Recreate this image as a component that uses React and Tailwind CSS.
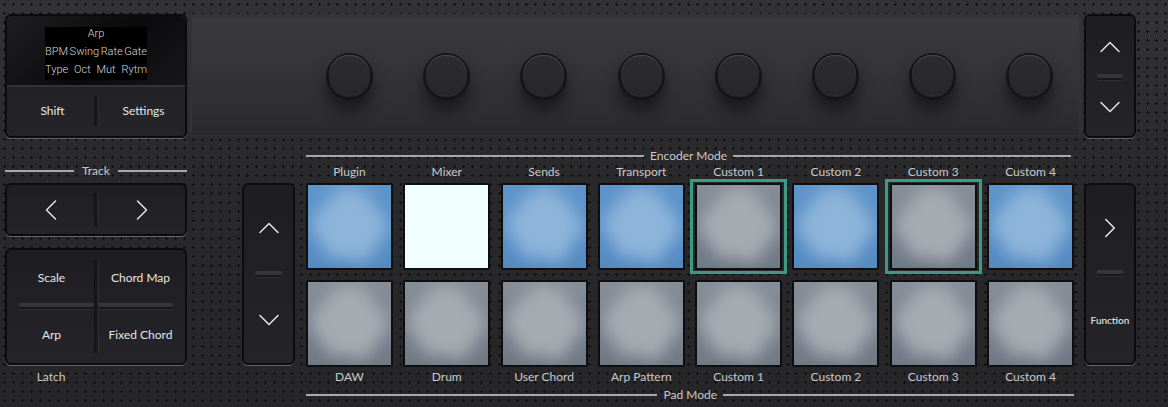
import { ChevronUp, ChevronDown, ChevronLeft, ChevronRight } from "lucide-react";

const font = "font-['Lato','Liberation_Sans',sans-serif]";

const topLabels = ["Plugin", "Mixer", "Sends", "Transport", "Custom 1", "Custom 2", "Custom 3", "Custom 4"];
const bottomLabels = ["DAW", "Drum", "User Chord", "Arp Pattern", "Custom 1", "Custom 2", "Custom 3", "Custom 4"];
const topPads = ["blue", "white", "blue", "blue", "active", "blue", "active", "blue"];

// panel button with the dark rim and the light lip along the bottom edge
function Panel({ className = "", children }) {
  return (
    <div
      className={`relative rounded-md border-2 border-[#0c0c0e] bg-[linear-gradient(180deg,#1e1e22,#252529)] shadow-[0_1px_0_0_#66666a] ${className}`}
    >
      {children}
    </div>
  );
}

function Groove({ vertical }) {
  return vertical ? (
    <div className="w-[4px] rounded-full bg-[#1b1b1e] shadow-[inset_1px_0_1px_#111113,1px_0_0_#2f2f33]" />
  ) : (
    <div className="h-[6px] rounded-full bg-[#37373b] shadow-[inset_0_-2px_1px_#18181b,0_1px_0_#2e2e32]" />
  );
}

function Pad({ kind }) {
  const base =
    kind === "blue"
      ? "bg-[linear-gradient(180deg,#5f95ca,#548ac1)]"
      : kind === "white"
        ? "bg-[#f1fefe]"
        : "bg-[linear-gradient(180deg,#868e98,#6f7885)]";
  // the glow under the pad: a few overlapping circles, blurred together
  const glow =
    kind === "blue"
      ? "bg-[radial-gradient(circle_at_50%_34%,#8db4da_25px,transparent_26px),radial-gradient(circle_at_28%_48%,#8db4da_19px,transparent_20px),radial-gradient(circle_at_72%_50%,#8db4da_19px,transparent_20px),radial-gradient(circle_at_36%_70%,#8db4da_15px,transparent_16px),radial-gradient(circle_at_62%_74%,#8db4da_15px,transparent_16px)]"
      : "bg-[radial-gradient(circle_at_50%_34%,#a6abb2_25px,transparent_26px),radial-gradient(circle_at_28%_48%,#a6abb2_19px,transparent_20px),radial-gradient(circle_at_72%_50%,#a6abb2_19px,transparent_20px),radial-gradient(circle_at_36%_70%,#a6abb2_15px,transparent_16px),radial-gradient(circle_at_62%_74%,#a6abb2_15px,transparent_16px)]";
  return (
    <div className="relative h-[87px]">
      <div className={`relative h-full overflow-hidden rounded-[2px] border-2 border-[#0d0e10] ${base}`}>
        {kind !== "white" && <div className={`absolute inset-0 blur-[8px] ${glow}`} />}
      </div>
      {kind === "active" && (
        <div className="absolute -inset-x-[5px] -inset-y-[4px] border-[3px] border-[#3f9a83]" />
      )}
    </div>
  );
}

function Knob() {
  return (
    <div className="h-[47px] w-[47px] rounded-full bg-[#151517] px-[3px] pb-[6px] pt-[2px] shadow-[0_12px_14px_#1c1c1f]">
      <div className="h-full w-full rounded-full bg-[linear-gradient(180deg,#2c2c30,#28282c)] shadow-[inset_0_1px_1px_#4a4a4e,0_3px_1px_#2a2a2e]" />
    </div>
  );
}

function Line() {
  return <div className="h-[2px] flex-1 bg-[#a9a9aa]" />;
}

export default function App() {
  return (
    <div
      className={`${font} flex h-[407px] w-[1168px] overflow-hidden bg-[#29292c] bg-[radial-gradient(#0f0f11_1px,transparent_1.4px),linear-gradient(180deg,#333336,#29292c_45%,#262629)] bg-[length:9px_9px,100%_100%] text-[12px] text-[#e6e6e6]`}
    >
      {/* left column */}
      <div className="ml-[5px] mt-[14px] flex w-[182px] flex-col">
        <Panel className="h-[124px]">
          <div className="flex h-[71px] items-start justify-center rounded-t-md border-b-2 border-[#333336] bg-[linear-gradient(135deg,#1f1f22_0%,#0a0a0c_55%,#17171a_100%)] pt-[11px]">
            <div className="flex h-[53px] w-[102px] flex-col gap-[4px] bg-black font-['Roboto',sans-serif] text-[11px] font-light leading-[14px] text-[#d8d8d8]">
              <div className="text-center">Arp</div>
              <div className="flex justify-between"><span>BPM</span><span>Swing</span><span>Rate</span><span>Gate</span></div>
              <div className="flex justify-between"><span>Type</span><span>Oct</span><span>Mut</span><span>Rytm</span></div>
            </div>
          </div>
          <div className="flex h-[47px] items-center">
            <div className="flex-1 pl-[4px] text-center">Shift</div>
            <div className="flex h-[30px]"><Groove vertical /></div>
            <div className="flex-1 pl-[4px] text-center">Settings</div>
          </div>
        </Panel>
        <div className="mt-[26px] flex h-[14px] items-center gap-[8px]">
          <Line />
          <span className="text-[#c9c9ca]">Track</span>
          <Line />
        </div>
        <Panel className="mt-[5px] h-[53px]">
          <div className="flex h-full items-center justify-center">
            <div className="flex flex-1 justify-center"><ChevronLeft size={36} strokeWidth={1} /></div>
            <div className="flex h-[34px]"><Groove vertical /></div>
            <div className="flex flex-1 justify-center"><ChevronRight size={36} strokeWidth={1} /></div>
          </div>
        </Panel>
        <Panel className="mt-[12px] h-[117px]">
          <div className="grid h-full grid-cols-2 grid-rows-2 text-center leading-none">
            <div className="flex items-center justify-center">Scale</div>
            <div className="flex items-center justify-center">Chord Map</div>
            <div className="flex items-center justify-center">Arp</div>
            <div className="flex items-center justify-center">Fixed Chord</div>
          </div>
          <div className="absolute inset-x-[11px] top-[53px]"><Groove /></div>
          <div className="absolute inset-y-[10px] left-1/2 flex -translate-x-1/2"><Groove vertical /></div>
        </Panel>
        <div className="mt-[3px] w-[92px] text-center text-[#c9c9ca]">Latch</div>
      </div>

      {/* middle column */}
      <div className="ml-[5px] flex w-[887px] flex-col">
        <div className="mt-[18px] h-[117px] bg-[linear-gradient(180deg,#3a393c,#323134_60%,#2a2a2d)] pl-[134px] pt-[35px] shadow-[0_-2px_5px_2px_#38373a,0_0_4px_2px_#2b2b2e]">
          <div className="flex gap-[50.2px]">
            {topLabels.map((_, i) => <Knob key={i} />)}
          </div>
        </div>
        <div className="ml-[114px] mt-[14px] flex h-[14px] items-center gap-[6px] pr-[8px]">
          <Line />
          <span className="text-[#c9c9ca]">Encoder Mode</span>
          <div className="h-[2px] w-[338px] bg-[#a9a9aa]" />
        </div>
        <div className="mt-[2px] flex">
          <Panel className="ml-[50px] mt-[18px] h-[182px] w-[53px]">
            <div className="flex h-full flex-col items-center justify-between py-[25px]">
              <ChevronUp size={36} strokeWidth={1} />
              <div className="w-[28px]"><Groove /></div>
              <ChevronDown size={36} strokeWidth={1} />
            </div>
          </Panel>
          <div className="ml-[11px] w-[768px]">
            <div className="grid grid-cols-8 gap-x-[10.4px]">
              {topLabels.map((l, i) => (
                <div key={i} className="text-center leading-[13px] text-[#c9c9ca]">{l}</div>
              ))}
            </div>
            <div className="mt-[5px] grid grid-cols-8 gap-x-[10.4px] gap-y-[10px]">
              {topPads.map((k, i) => <Pad key={i} kind={k} />)}
              {bottomLabels.map((_, i) => <Pad key={i} kind="grey" />)}
            </div>
            <div className="mt-[2px] grid grid-cols-8 gap-x-[10.4px]">
              {bottomLabels.map((l, i) => (
                <div key={i} className="text-center leading-[15px] text-[#c9c9ca]">{l}</div>
              ))}
            </div>
            <div className="mt-[4px] flex h-[14px] items-center gap-[6px]">
              <Line />
              <span className="text-[#c9c9ca]">Pad Mode</span>
              <div className="h-[2px] w-[351px] bg-[#a9a9aa]" />
            </div>
          </div>
        </div>
      </div>

      {/* right column */}
      <div className="ml-[5px] mt-[14px] flex w-[52px] flex-col">
        <Panel className="h-[124px]">
          <div className="flex h-full flex-col items-center justify-between pb-[11px] pt-[13px]">
            <ChevronUp size={36} strokeWidth={1} />
            <div className="w-[28px]"><Groove /></div>
            <ChevronDown size={36} strokeWidth={1} />
          </div>
        </Panel>
        <Panel className="mt-[45px] h-[182px]">
          <div className="flex h-full flex-col items-center pt-[26px]">
            <ChevronRight size={34} strokeWidth={1.1} />
            <div className="mt-[25px] w-[28px]"><Groove /></div>
            <div className="mt-[37px] text-[10px] font-medium leading-[14px]">Function</div>
          </div>
        </Panel>
      </div>
    </div>
  );
}
